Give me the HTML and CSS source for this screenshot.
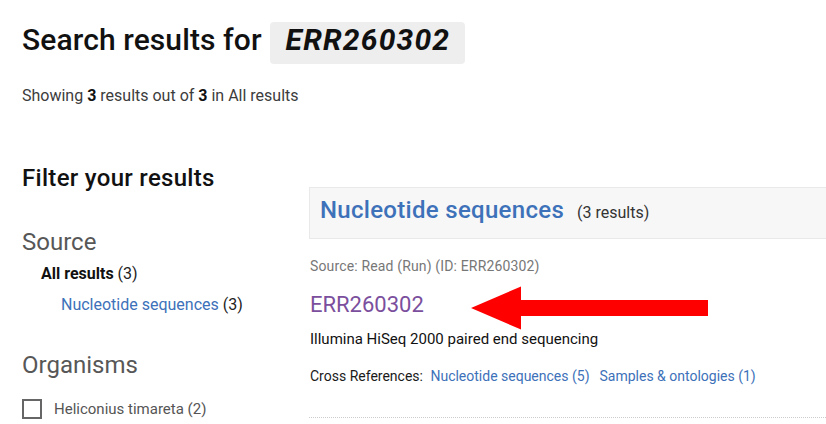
FILE: index.html
```html
<!DOCTYPE html>
<html lang="en">
<head>
<meta charset="utf-8">
<title>Search results for ERR260302</title>
<link rel="stylesheet" href="styles.css">
</head>
<body>
<header class="page-head">
  <h1 class="title">Search results for <span class="term">ERR260302</span></h1>
  <p class="summary">Showing <b>3</b> results out of <b>3</b> in All results</p>
</header>
<div class="layout">
  <aside class="filters">
    <h2 class="filters-title">Filter your results</h2>
    <h3 class="facet-title">Source</h3>
    <ul class="source-list">
      <li class="source-all"><b>All results</b> (3)</li>
      <li class="source-sub"><a href="#" class="link">Nucleotide sequences</a> (3)</li>
    </ul>
    <h3 class="facet-title facet-organisms">Organisms</h3>
    <label class="check"><span class="box"></span><span class="check-label">Heliconius timareta (2)</span></label>
  </aside>
  <main class="results">
    <div class="domain-head">
      <a href="#" class="domain-name">Nucleotide sequences</a>
      <span class="domain-count">(3 results)</span>
    </div>
    <div class="result">
      <p class="result-source">Source: Read (Run) (ID: ERR260302)</p>
      <div class="id-row">
        <a href="#" class="result-id">ERR260302</a>
        <svg class="arrow" width="238" height="44" viewBox="0 0 238 44"><polygon points="0,22 50,0.5 50,14 237,14 237,30 50,30 50,43.5" fill="#ff0000"/></svg>
      </div>
      <p class="result-desc">Illumina HiSeq 2000 paired end sequencing</p>
      <p class="xrefs">Cross References: <a href="#" class="link xref">Nucleotide sequences (5)</a><a href="#" class="link xref">Samples &amp; ontologies (1)</a></p>
    </div>
  </main>
</div>
</body>
</html>
```

FILE: styles.css
```css
html, body {
  margin: 0;
  padding: 0;
  background: #fff;
}
body {
  font-family: Roboto, "Noto Sans", sans-serif;
  color: #1a1a1a;
  overflow: hidden;
}
a { text-decoration: none; }
.page-head {
  padding: 22px 0 0 22px;
}
.title {
  display: flex;
  align-items: flex-start;
  gap: 8px;
  margin: 0;
  font-size: 30px;
  font-weight: 500;
  line-height: 36px;
  color: #111;
  letter-spacing: 0.1px;
}
.term {
  background: #eeeeee;
  border-radius: 4px;
  padding: 0 15px 6px 16px;
  font-style: italic;
  font-weight: 700;
  letter-spacing: 1.2px;
}
.summary {
  margin: 22px 0 0;
  font-size: 16px;
  line-height: 20px;
  color: #3c3c3c;
}
.summary b { color: #111; }
.layout {
  display: flex;
  padding-left: 22px;
}
.filters {
  width: 287px;
  flex: none;
  padding-top: 57px;
}
.filters-title {
  margin: 0;
  font-size: 24px;
  font-weight: 500;
  line-height: 30px;
  color: #111;
  letter-spacing: 0.3px;
}
.facet-title {
  margin: 34px 0 0;
  font-size: 24px;
  font-weight: 400;
  line-height: 30px;
  color: #575757;
}
.source-list {
  list-style: none;
  margin: 7px 0 0;
  padding: 0;
  font-size: 16px;
  line-height: 20px;
  color: #222;
}
.source-all { padding-left: 19px; }
.source-all b { color: #111; }
.source-sub { padding-left: 39px; margin-top: 11px; }
.link { color: #3d71b9; }
.facet-organisms { margin-top: 35px; }
.check {
  display: flex;
  align-items: center;
  gap: 12px;
  margin-top: 19px;
  font-size: 15px;
  line-height: 20px;
  color: #555;
}
.box {
  width: 20px;
  height: 20px;
  box-sizing: border-box;
  border: 2px solid #666;
}
.results {
  flex: 1;
  padding-top: 81px;
  margin-right: -10px;
}
.domain-head {
  display: flex;
  align-items: baseline;
  gap: 13px;
  background: #f7f7f7;
  border: 1px solid #e9e9e9;
  padding: 7px 10px 13px;
}
.domain-name {
  font-size: 24px;
  font-weight: 500;
  line-height: 30px;
  color: #3d71b9;
  letter-spacing: 0.3px;
}
.domain-count {
  font-size: 16px;
  color: #333;
}
.result {
  padding: 0 0 31px 1px;
  border-bottom: 1px dotted #cccccc;
}
.result-source {
  margin: 17px 0 0;
  font-size: 14px;
  line-height: 20px;
  color: #777;
  letter-spacing: 0.15px;
}
.id-row {
  position: relative;
  margin-top: 14px;
  height: 30px;
}
.result-id {
  font-size: 22px;
  line-height: 30px;
  color: #7b4f9d;
}
.arrow {
  position: absolute;
  left: 161px;
  top: -4px;
}
.result-desc {
  margin: 9px 0 0;
  font-size: 15px;
  line-height: 20px;
  color: #111;
}
.xrefs {
  margin: 17px 0 0;
  font-size: 14px;
  line-height: 20px;
  color: #1a1a1a;
}
.xref { margin-left: 4px; }
.xref + .xref { margin-left: 10px; }
```
